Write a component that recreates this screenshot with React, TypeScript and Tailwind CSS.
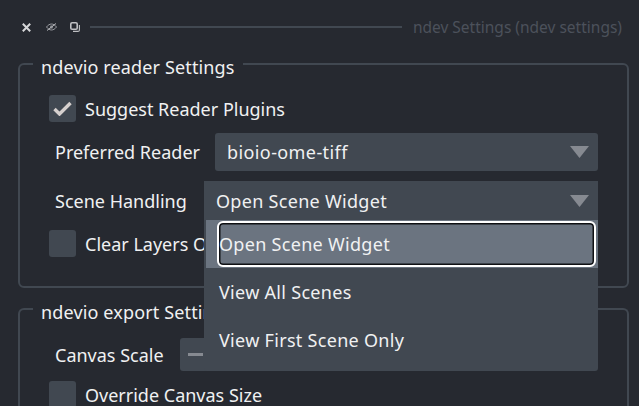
const OPTIONS = ['View All Scenes', 'View First Scene Only']

function Arrow() {
  return (
    <svg width="19" height="12" viewBox="0 0 19 12" className="shrink-0">
      <path d="M0 0H19L9.5 12Z" fill="#868a91" />
    </svg>
  )
}

function CheckRow({ label, checked, className = '' }: { label: string; checked?: boolean; className?: string }) {
  return (
    <div className={`flex items-center gap-[9px] pl-[29px] ${className}`}>
      <span className="flex h-[27px] w-[27px] items-center justify-center rounded-[3px] bg-[#414851]">
        {checked && (
          <svg width="19" height="15" viewBox="0 0 19 15" fill="none" stroke="#d6d0ce" strokeWidth="3.4">
            <path d="M1.500 8l5 5L17.500 2" />
          </svg>
        )}
      </span>
      <span className="whitespace-nowrap">{label}</span>
    </div>
  )
}

function TitleBar() {
  return (
    <div className="flex h-[52px] items-center pt-[2px] pl-[22px] pr-[17px]">
      <svg width="9" height="9" viewBox="0 0 9 9" fill="none" stroke="#d6d7d9" strokeWidth="2">
        <path d="M.800.800l7.400 7.400M8.200.800L.800 8.200" />
      </svg>
      <svg width="11" height="8" viewBox="0 0 11 8" fill="none" stroke="#9a9ca1" className="ml-[15px]">
        <path d="M.500 4C2 2 3.800 1 5.500 1s3.500 1 5 3C9 6 7.200 7 5.500 7S2 6 .500 4Z" strokeWidth="1" />
        <circle cx="5.500" cy="4" r="1.700" fill="#7d8086" stroke="none" />
        <path d="M1 7.500L10 .500" stroke="#b4b5b9" strokeWidth="1" />
      </svg>
      <svg width="10" height="10" viewBox="0 0 10 10" fill="none" stroke="#bfc0c3" className="ml-[13px]">
        <rect x=".800" y=".800" width="6.400" height="6.400" rx="1.300" strokeWidth="1.600" />
        <path d="M9.400 3V7.900A1.500 1.500 0 0 1 7.900 9.400H3" strokeWidth="1.100" />
      </svg>
      <div className="ml-[10px] h-[2px] flex-1 bg-[#414851]" />
      <span className="ml-[11px] text-[15.5px] whitespace-nowrap text-[#4c515b]">ndev Settings (ndev settings)</span>
    </div>
  )
}

export default function App() {
  return (
    <div className="relative h-[406px] w-[639px] overflow-hidden bg-[#262930] font-['Noto_Sans','Open_Sans',sans-serif] text-[18px] leading-[24px] text-[#f0f1f2]">
      <TitleBar />

      <div className="flex flex-col gap-[9px] pl-[18px] pr-[10px]">
        <fieldset className="h-[236px] rounded-[6px] border-2 border-[#414851]">
          <legend className="ml-[13px] px-[8px] pt-[6px] leading-[18px] tracking-[0.14px]">ndevio reader Settings</legend>
          <CheckRow label="Suggest Reader Plugins" checked className="mt-[19px]" />
          <div className="mt-[11px] flex h-[38px] items-center pl-[35px]">
            <span className="w-[160px] whitespace-nowrap">Preferred Reader</span>
            <div className="flex h-full w-[383px] items-center justify-between rounded-[3px] bg-[#414851] pl-[12px] pr-[9px] tracking-[0.4px]">
              <span>bioio-ome-tiff</span>
              <Arrow />
            </div>
          </div>
          <div className="mt-[10px] flex h-[39px] items-center pl-[35px]">
            <span className="whitespace-nowrap">Scene Handling</span>
          </div>
          <CheckRow label="Clear Layers On New Scene" className="mt-[10px]" />
        </fieldset>

        <fieldset className="h-[120px] rounded-t-[6px] border-2 border-b-0 border-[#414851]">
          <legend className="ml-[13px] px-[8px] pt-[6px] leading-[18px] tracking-[0.14px]">ndevio export Settings</legend>
          <div className="mt-[17px] flex h-[33px] items-center pl-[35px]">
            <span className="w-[125px] whitespace-nowrap">Canvas Scale</span>
            <div className="flex h-full w-[200px] items-center rounded-[3px] bg-[#414851] pl-[8px]">
              <span className="h-[3px] w-[15px] bg-[#868a91]" />
            </div>
          </div>
          <CheckRow label="Override Canvas Size" className="mt-[10px]" />
        </fieldset>
      </div>

      {/* open combo popup */}
      <div className="absolute top-[181px] left-[204px] w-[394px] overflow-hidden rounded-b-[3px] bg-[#414851] tracking-[0.3px]">
        <div className="flex h-[39px] items-center justify-between pl-[12px] pr-[9px]">
          <span>Open Scene Widget</span>
          <Arrow />
        </div>
        <div className="ml-[2px] h-[48px] bg-[#6b7480] py-[1px] pl-[11px] pr-[2px]">
          <div className="flex h-full items-center rounded-[6px] border-2 border-white shadow-[inset_0_0_0_1.5px_#0f1013]">
            Open Scene Widget
          </div>
        </div>
        {OPTIONS.map((o) => (
          <div key={o} className="flex h-[48px] items-center pl-[15px]">{o}</div>
        ))}
        <div className="h-[7px]" />
      </div>
    </div>
  )
}
